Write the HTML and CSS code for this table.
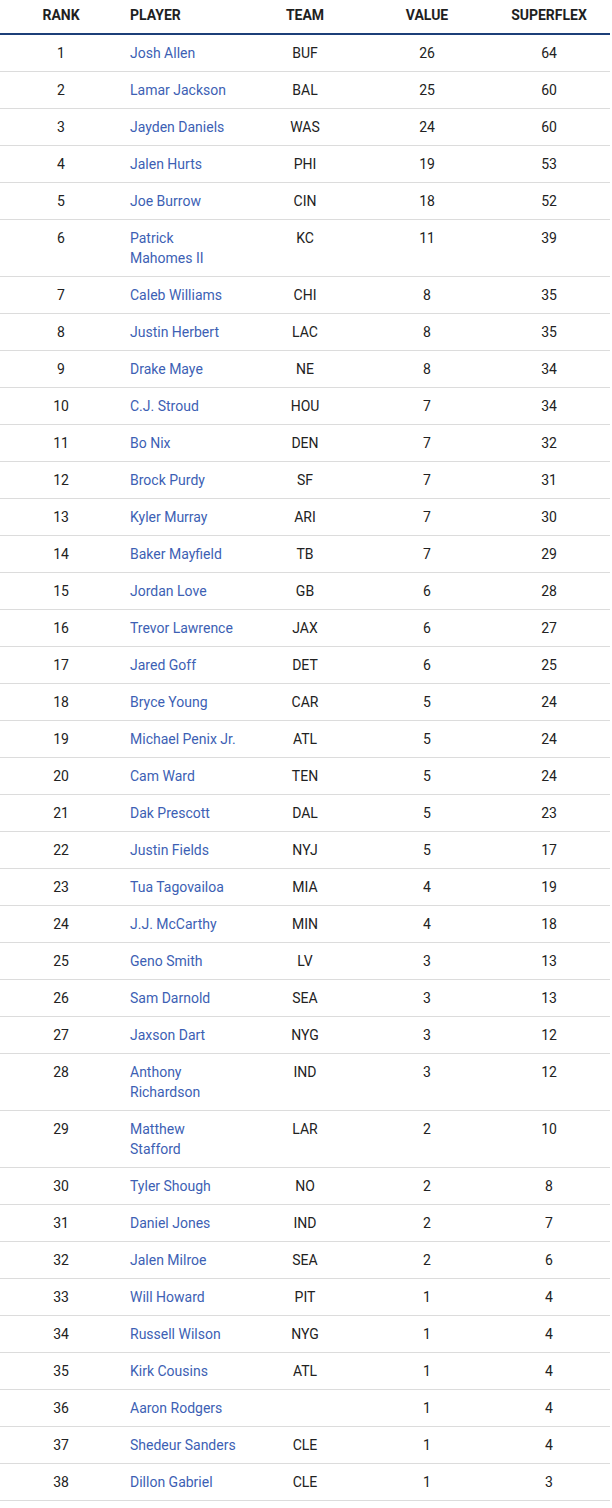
FILE: index.html
```html
<!DOCTYPE html>
<html>
<head>
<meta charset="utf-8">
<link rel="stylesheet" href="styles.css">
</head>
<body>
<table class="rank-table">
<colgroup><col class="c"><col class="c"><col class="c"><col class="c"><col class="c"></colgroup>
<thead>
<tr><th>Rank</th><th class="left">Player</th><th>Team</th><th>Value</th><th>Superflex</th></tr>
</thead>
<tbody>
<tr><td>1</td><td class="player"><a>Josh Allen</a></td><td>BUF</td><td>26</td><td>64</td></tr>
<tr><td>2</td><td class="player"><a>Lamar Jackson</a></td><td>BAL</td><td>25</td><td>60</td></tr>
<tr><td>3</td><td class="player"><a>Jayden Daniels</a></td><td>WAS</td><td>24</td><td>60</td></tr>
<tr><td>4</td><td class="player"><a>Jalen Hurts</a></td><td>PHI</td><td>19</td><td>53</td></tr>
<tr><td>5</td><td class="player"><a>Joe Burrow</a></td><td>CIN</td><td>18</td><td>52</td></tr>
<tr><td>6</td><td class="player"><a>Patrick<br>Mahomes II</a></td><td>KC</td><td>11</td><td>39</td></tr>
<tr><td>7</td><td class="player"><a>Caleb Williams</a></td><td>CHI</td><td>8</td><td>35</td></tr>
<tr><td>8</td><td class="player"><a>Justin Herbert</a></td><td>LAC</td><td>8</td><td>35</td></tr>
<tr><td>9</td><td class="player"><a>Drake Maye</a></td><td>NE</td><td>8</td><td>34</td></tr>
<tr><td>10</td><td class="player"><a>C.J. Stroud</a></td><td>HOU</td><td>7</td><td>34</td></tr>
<tr><td>11</td><td class="player"><a>Bo Nix</a></td><td>DEN</td><td>7</td><td>32</td></tr>
<tr><td>12</td><td class="player"><a>Brock Purdy</a></td><td>SF</td><td>7</td><td>31</td></tr>
<tr><td>13</td><td class="player"><a>Kyler Murray</a></td><td>ARI</td><td>7</td><td>30</td></tr>
<tr><td>14</td><td class="player"><a>Baker Mayfield</a></td><td>TB</td><td>7</td><td>29</td></tr>
<tr><td>15</td><td class="player"><a>Jordan Love</a></td><td>GB</td><td>6</td><td>28</td></tr>
<tr><td>16</td><td class="player"><a>Trevor Lawrence</a></td><td>JAX</td><td>6</td><td>27</td></tr>
<tr><td>17</td><td class="player"><a>Jared Goff</a></td><td>DET</td><td>6</td><td>25</td></tr>
<tr><td>18</td><td class="player"><a>Bryce Young</a></td><td>CAR</td><td>5</td><td>24</td></tr>
<tr><td>19</td><td class="player"><a>Michael Penix Jr.</a></td><td>ATL</td><td>5</td><td>24</td></tr>
<tr><td>20</td><td class="player"><a>Cam Ward</a></td><td>TEN</td><td>5</td><td>24</td></tr>
<tr><td>21</td><td class="player"><a>Dak Prescott</a></td><td>DAL</td><td>5</td><td>23</td></tr>
<tr><td>22</td><td class="player"><a>Justin Fields</a></td><td>NYJ</td><td>5</td><td>17</td></tr>
<tr><td>23</td><td class="player"><a>Tua Tagovailoa</a></td><td>MIA</td><td>4</td><td>19</td></tr>
<tr><td>24</td><td class="player"><a>J.J. McCarthy</a></td><td>MIN</td><td>4</td><td>18</td></tr>
<tr><td>25</td><td class="player"><a>Geno Smith</a></td><td>LV</td><td>3</td><td>13</td></tr>
<tr><td>26</td><td class="player"><a>Sam Darnold</a></td><td>SEA</td><td>3</td><td>13</td></tr>
<tr><td>27</td><td class="player"><a>Jaxson Dart</a></td><td>NYG</td><td>3</td><td>12</td></tr>
<tr><td>28</td><td class="player"><a>Anthony<br>Richardson</a></td><td>IND</td><td>3</td><td>12</td></tr>
<tr><td>29</td><td class="player"><a>Matthew<br>Stafford</a></td><td>LAR</td><td>2</td><td>10</td></tr>
<tr><td>30</td><td class="player"><a>Tyler Shough</a></td><td>NO</td><td>2</td><td>8</td></tr>
<tr><td>31</td><td class="player"><a>Daniel Jones</a></td><td>IND</td><td>2</td><td>7</td></tr>
<tr><td>32</td><td class="player"><a>Jalen Milroe</a></td><td>SEA</td><td>2</td><td>6</td></tr>
<tr><td>33</td><td class="player"><a>Will Howard</a></td><td>PIT</td><td>1</td><td>4</td></tr>
<tr><td>34</td><td class="player"><a>Russell Wilson</a></td><td>NYG</td><td>1</td><td>4</td></tr>
<tr><td>35</td><td class="player"><a>Kirk Cousins</a></td><td>ATL</td><td>1</td><td>4</td></tr>
<tr><td>36</td><td class="player"><a>Aaron Rodgers</a></td><td></td><td>1</td><td>4</td></tr>
<tr><td>37</td><td class="player"><a>Shedeur Sanders</a></td><td>CLE</td><td>1</td><td>4</td></tr>
<tr><td>38</td><td class="player"><a>Dillon Gabriel</a></td><td>CLE</td><td>1</td><td>3</td></tr>
</tbody>
</table>
</body>
</html>
```

FILE: styles.css
```css
html, body {
  margin: 0;
  padding: 0;
  background: #ffffff;
}
body {
  font-family: Roboto, "Liberation Sans", Arial, sans-serif;
  color: #222222;
}
.rank-table {
  width: 610px;
  table-layout: fixed;
  border-collapse: collapse;
}
.rank-table col.c {
  width: 122px;
}
.rank-table th {
  font-size: 14px;
  font-weight: 700;
  text-transform: uppercase;
  color: #1f1f1f;
  text-align: center;
  line-height: 18px;
  padding: 6px 8px 9px;
  border-bottom: 2px solid #1c3f78;
}
.rank-table th.left {
  text-align: left;
}
.rank-table td {
  font-size: 14px;
  line-height: 20px;
  padding: 8px 8px;
  text-align: center;
  vertical-align: top;
  border-bottom: 1px solid #dcdcdc;
  color: #222222;
}
.rank-table td.player {
  text-align: left;
}
.rank-table td.player a {
  color: #3d5fb4;
  text-decoration: none;
}
```
